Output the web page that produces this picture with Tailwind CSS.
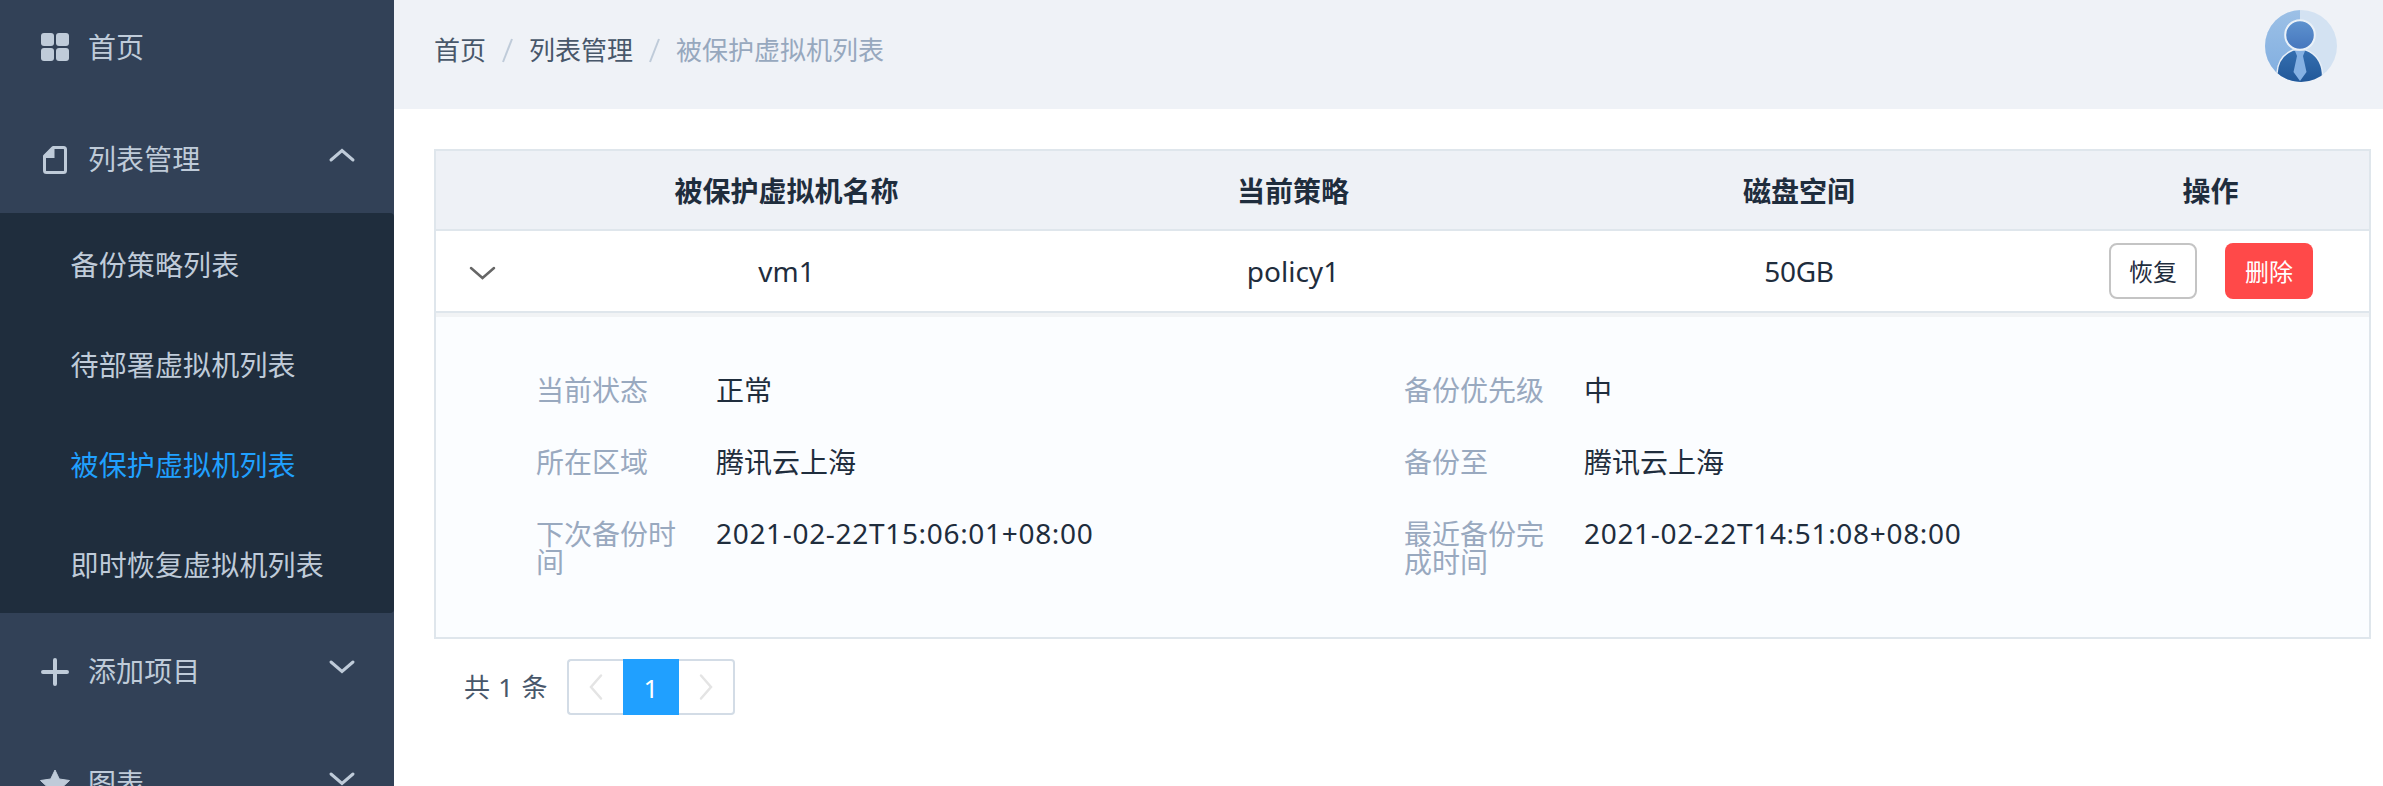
<!DOCTYPE html>
<html lang="zh-CN">
<head>
<meta charset="utf-8">
<title>被保护虚拟机列表</title>
<script src="https://cdn.jsdelivr.net/npm/@tailwindcss/browser@4"></script>
</head>
<body class="flex h-[786px] w-[2383px] overflow-hidden bg-white font-['Noto_Sans','Noto_Sans_CJK_SC',sans-serif] text-[28px] leading-none text-[#1f2d3d]">

<aside class="h-full w-[394px] shrink-0 overflow-hidden bg-[#324157] text-[#bfcbd9]">
  <nav class="-mt-[11px]">
    <a class="flex h-28 items-center pl-10">
      <svg class="mt-1 size-[30px]" viewBox="0 0 30 30" fill="currentColor"><rect x="1" y="1" width="13" height="13" rx="3"/><rect x="16" y="1" width="13" height="13" rx="3"/><rect x="1" y="16" width="13" height="13" rx="3"/><rect x="16" y="16" width="13" height="13" rx="3"/></svg>
      <span class="ml-[18px] pt-[3px] tracking-[0.1px]">首页</span>
    </a>
    <a class="flex h-28 items-center pl-10 pr-[38px]">
      <svg class="mt-1.5 size-[30px]" viewBox="0 0 30 30"><path d="M13 2.500H23.500Q25.500 2.500 25.500 4.500V25.500Q25.500 27.500 23.500 27.500H6.500Q4.500 27.500 4.500 25.500V11Z" fill="none" stroke="currentColor" stroke-width="3" stroke-linejoin="round"/><path d="M12 2.500L4.500 10V13H14.500V2.500Z" fill="currentColor"/></svg>
      <span class="ml-[18px] pt-[3px] tracking-[0.1px]">列表管理</span>
      <svg class="mb-1 ml-auto h-4 w-7" viewBox="0 0 28 16" fill="none" stroke="currentColor" stroke-width="3" stroke-linecap="round"><path d="M3 13L14 3.500L25 13"/></svg>
    </a>
    <div class="rounded-r-sm bg-[#1f2d3d] tracking-[0.15px]">
      <a class="flex h-[100px] items-center pl-[70.5px] pt-[3px]">备份策略列表</a>
      <a class="flex h-[100px] items-center pl-[70.5px] pt-[3px]">待部署虚拟机列表</a>
      <a class="flex h-[100px] items-center pl-[70.5px] pt-[3px] text-[#20a0ff]">被保护虚拟机列表</a>
      <a class="flex h-[100px] items-center pl-[70.5px] pt-[3px]">即时恢复虚拟机列表</a>
    </div>
    <a class="flex h-28 items-center pl-10 pr-[38px]">
      <svg class="mt-1.5 size-[30px]" viewBox="0 0 30 30" fill="none" stroke="currentColor" stroke-width="4" stroke-linecap="round"><path d="M15 3V27M3 15H27"/></svg>
      <span class="ml-[18px] pt-[3px] tracking-[0.1px]">添加项目</span>
      <svg class="mb-1 ml-auto h-4 w-7" viewBox="0 0 28 16" fill="none" stroke="currentColor" stroke-width="3" stroke-linecap="round"><path d="M3 3L14 12.500L25 3"/></svg>
    </a>
    <a class="flex h-28 items-center pl-10 pr-[38px]">
      <svg class="mt-1.5 size-[30px]" viewBox="0 0 30 30" fill="currentColor" stroke="currentColor" stroke-width="1" stroke-linejoin="round"><path d="M15 1L19.300 10L29.500 11.500L22 18.500L24 28L15 23L6 28L8 18.500L0.500 11.500L10.700 10Z"/></svg>
      <span class="ml-[18px] pt-[3px] tracking-[0.1px]">图表</span>
      <svg class="mb-1 ml-auto h-4 w-7" viewBox="0 0 28 16" fill="none" stroke="currentColor" stroke-width="3" stroke-linecap="round"><path d="M3 3L14 12.500L25 3"/></svg>
    </a>
  </nav>
</aside>

<main class="min-w-0 flex-1">
  <header class="flex h-[109px] items-start justify-between bg-[#eff2f7] pl-10 pr-[46px] pt-2.5">
    <div class="flex h-20 items-center text-[26px] text-[#48576a]">
      <span>首页</span>
      <svg class="h-7 w-[43px]" viewBox="0 0 43 28" stroke="#bfcbd9" stroke-width="2"><path d="M17 26L26 3"/></svg>
      <span>列表管理</span>
      <svg class="h-7 w-[43px]" viewBox="0 0 43 28" stroke="#bfcbd9" stroke-width="2"><path d="M17 26L26 3"/></svg>
      <span class="text-[#97a8be]">被保护虚拟机列表</span>
    </div>
    <svg class="size-[72px]" viewBox="0 0 72 72">
      <defs>
        <clipPath id="disc"><circle cx="36" cy="36" r="36"/></clipPath>
        <linearGradient id="left" x1="0" y1="0" x2="0" y2="1"><stop offset="0" stop-color="#9cc0e6"/><stop offset="1" stop-color="#7fade0"/></linearGradient>
        <linearGradient id="head" x1="0" y1="0" x2="0" y2="1"><stop offset="0" stop-color="#5f93cf"/><stop offset="1" stop-color="#4576bd"/></linearGradient>
        <linearGradient id="suit" x1="0" y1="0" x2="0" y2="1"><stop offset="0" stop-color="#356fb0"/><stop offset="1" stop-color="#1f5596"/></linearGradient>
      </defs>
      <g clip-path="url(#disc)">
        <rect width="72" height="72" fill="#d3e2f2"/>
        <rect width="35" height="72" fill="url(#left)"/>
        <path d="M12 76V63Q13 46 28 40H41Q56 46 57.500 63V76Z" fill="url(#suit)" stroke="#e6eef7" stroke-width="1.500"/>
        <circle cx="35" cy="25" r="14.800" fill="url(#head)" stroke="#eaf1f8" stroke-width="2"/>
        <path d="M30 41H40L38 46L41.500 62L35 71L28.500 62L32 46Z" fill="#85b1e3"/>
      </g>
    </svg>
  </header>

  <section class="ml-10 mt-10 w-[1937px] border-2 border-[#dfe6ec]">
    <div class="grid h-20 grid-cols-[97px_507px_506px_506px_317px] items-center border-b-2 border-[#dfe6ec] bg-[#eef1f6] pt-[2px] text-center font-bold">
      <span></span><span>被保护虚拟机名称</span><span>当前策略</span><span>磁盘空间</span><span>操作</span>
    </div>
    <div class="grid h-[82px] grid-cols-[97px_507px_506px_506px_317px] items-center border-b-2 border-[#dfe6ec] text-center">
      <svg class="ml-8 mt-1 h-4 w-7" viewBox="0 0 28 16" fill="none" stroke="#666" stroke-width="2.500" stroke-linecap="round"><path d="M3 3L14.500 13L26 3"/></svg>
      <span class="pb-px">vm1</span><span class="pb-px">policy1</span><span class="pb-px tracking-[-0.3px]">50GB</span>
      <div class="flex justify-center gap-7 pl-px text-2xl leading-none">
        <button class="h-14 w-[88px] rounded-lg border-2 border-[#c4c4c4] bg-white pt-0.5">恢复</button>
        <button class="h-14 w-[88px] rounded-lg bg-[#ff4949] pt-0.5 text-white">删除</button>
      </div>
    </div>
    <div class="h-[324px] border-t-4 border-[#f1f3f5] bg-[#fbfdff] pl-[100px] pr-[97px] pt-[59px]">
      <dl class="grid grid-cols-2 gap-y-11">
        <div class="flex h-7"><dt class="w-[180px] shrink-0 pr-[39px] text-[#99a9bf]">当前状态</dt><dd>正常</dd></div>
        <div class="flex h-7"><dt class="w-[180px] shrink-0 pr-[39px] text-[#99a9bf]">备份优先级</dt><dd>中</dd></div>
        <div class="flex h-7"><dt class="w-[180px] shrink-0 pr-[39px] text-[#99a9bf]">所在区域</dt><dd>腾讯云上海</dd></div>
        <div class="flex h-7"><dt class="w-[180px] shrink-0 pr-[39px] text-[#99a9bf]">备份至</dt><dd>腾讯云上海</dd></div>
        <div class="flex h-14"><dt class="w-[180px] shrink-0 pr-[39px] text-[#99a9bf]">下次备份时间</dt><dd class="-mt-px tracking-[0.68px]">2021-02-22T15:06:01+08:00</dd></div>
        <div class="flex h-14"><dt class="w-[180px] shrink-0 pr-[39px] text-[#99a9bf]">最近备份完成时间</dt><dd class="-mt-px tracking-[0.68px]">2021-02-22T14:51:08+08:00</dd></div>
      </dl>
    </div>
  </section>

  <div class="ml-[70px] mt-5 flex h-14 items-center text-[26px] text-[#48576a]">
    <span class="w-[103px] whitespace-nowrap [word-spacing:1.5px]">共 1 条</span>
    <span class="flex h-14 w-14 items-center justify-center rounded-l border-2 border-r-0 border-[#d3dce6]"><svg class="h-7 w-4" viewBox="0 0 16 28" fill="none" stroke="#e4e4e4" stroke-width="2.500" stroke-linecap="round"><path d="M13 2.500L3 14L13 25.500"/></svg></span>
    <span class="flex h-14 w-14 items-center justify-center bg-[#20a0ff] pt-0.5 text-white">1</span>
    <span class="flex h-14 w-14 items-center justify-center rounded-r border-2 border-l-0 border-[#d3dce6]"><svg class="h-7 w-4" viewBox="0 0 16 28" fill="none" stroke="#e4e4e4" stroke-width="2.500" stroke-linecap="round"><path d="M3 2.500L13 14L3 25.500"/></svg></span>
  </div>
</main>
</body>
</html>
